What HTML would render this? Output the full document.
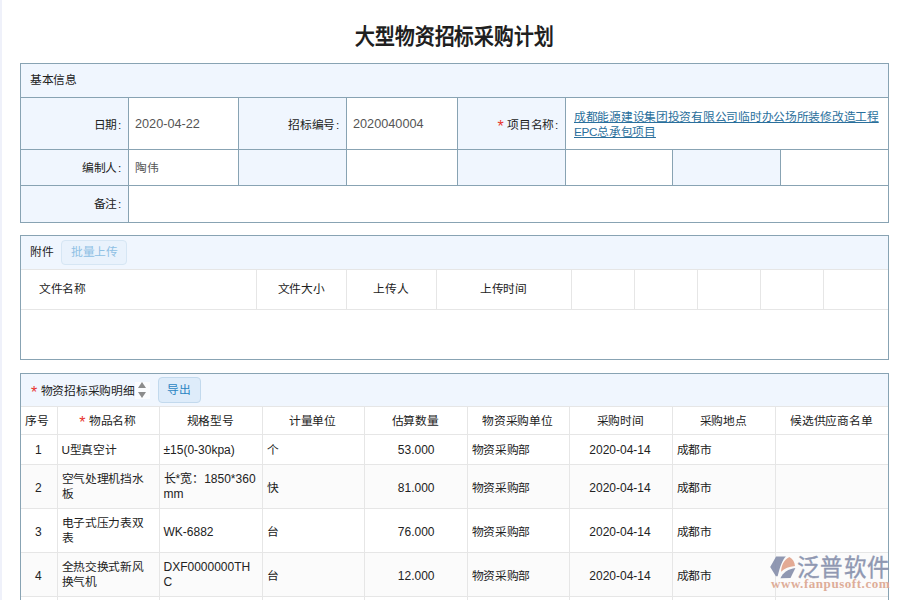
<!DOCTYPE html>
<html lang="zh-CN">
<head>
<meta charset="utf-8">
<title>大型物资招标采购计划</title>
<style>
*{box-sizing:border-box;margin:0;padding:0}
html,body{width:900px;height:600px;overflow:hidden;background:#fff}
body{font-family:"Liberation Sans",sans-serif;font-size:11.75px;color:#222;position:relative;letter-spacing:-.28px}
.strip{position:absolute;left:0;top:0;width:2px;height:600px;background:#eff1fa}
h1{position:absolute;left:20px;top:21.5px;width:869px;text-align:center;font-size:19.8px;line-height:28px;font-weight:bold;color:#1f1f1f;letter-spacing:-.15px;transform:scaleY(1.1);transform-origin:50% 50%}
table{border-collapse:collapse;table-layout:fixed}
.req{color:#e8352e;margin-right:3.5px;font-size:16px;line-height:0;vertical-align:-3px;letter-spacing:0}
.co{margin-left:1px}
#t1 tr.r2 td{padding-top:0}
#t1 tr.last td{padding-top:0;padding-bottom:1px}
a{color:#2a6f9c;text-decoration:underline}

/* basic info */
#t1{position:absolute;left:20px;top:63px;width:868px}
#t1 td{border:1px solid #88a3b3;vertical-align:middle;padding:1px 6px 0;line-height:15px;background:#fff}
#t1 td.l{background:#f0f6fe;text-align:right;padding-right:7px}
#t1 td.hd{background:#f0f6fe;padding:0 0 2px 9px}
#t1 td.v{font-size:12.7px;color:#555;letter-spacing:0}
#t1 td.n{color:#555}

/* attachments */
.box{position:absolute;left:20px;width:869px;border:1px solid #88a3b3;background:#fff}
#b2{top:235px;height:125px}
#b2 .hd{height:33px;line-height:31px;background:#f0f6fe;padding-left:9px}
.btn{display:inline-block;vertical-align:top;border-radius:4px;text-align:center}
#b2 .btn{margin:4px 0 0 8px;width:66px;height:25px;line-height:22px;border:1px solid #d6e6f4;background:#e9f2fc;color:#8ec0e4}
#t2{position:absolute;left:0;top:33px;width:867px}
#t2 td{height:40px;border:1px solid #e6e6e6;border-left:0;padding:0 0 4px 18px}
#t2 td.c{text-align:center;padding:0 0 4px}
#t2 td:last-child{border-right:0}

/* detail */
#b3{top:373px;height:240px;border-bottom:0}
#b3 .hd{height:32px;line-height:33px;background:#f0f6fe;padding-left:10px;white-space:nowrap}
#b3 .btn{margin:3px 0 0 8px;width:43px;height:26px;line-height:24px;border:1px solid #c2d9ed;background:#deecfa;color:#2a85c2}
.sort{display:inline-block;vertical-align:top;width:15px;height:17px;margin:8px 0 0 0;background:#fbfcfe;position:relative}
.sort i{position:absolute;left:3px;width:0;height:0;border-left:4px solid transparent;border-right:4px solid transparent}
.sort i.u{top:0;border-bottom:6px solid #8c8c8c}
.sort i.d{top:10px;border-top:6px solid #8c8c8c}
#t3{position:absolute;left:0;top:32px;width:867px}
#t3 td{border:1px solid #e6e6e6;border-left:0;padding:0 5px 0 4px;line-height:14.7px;vertical-align:middle;word-break:break-all}
#t3 td:last-child{border-right:0}
#t3 tr.h td{height:28px;text-align:center;padding-top:2px}
#t3 tr.one td{padding-top:2px}
#t3 td.s{padding-top:3px}
#t3 tr.g td{background:#fbfbfb}
#t3 td.c{text-align:center}
#t3 td.r{text-align:right;padding-right:32px}
#t3 td.en{font-size:12px;line-height:15px;letter-spacing:0}

/* watermark */
#wm{position:absolute;left:765px;top:550px;width:135px;height:50px;opacity:.92}
#wm .cn{position:absolute;left:32px;top:5.5px;transform:scaleY(1.05);transform-origin:0 50%;-webkit-text-stroke:.35px #8790ac;font-size:22.5px;line-height:26px;color:#8790ac;letter-spacing:.3px;white-space:nowrap}
#wm .url{position:absolute;left:6px;top:26px;font-family:"Liberation Serif",serif;font-weight:bold;font-size:13px;line-height:16px;color:#dca791;letter-spacing:.55px;white-space:nowrap}
</style>
</head>
<body>
<div class="strip"></div>
<h1>大型物资招标采购计划</h1>

<table id="t1">
  <colgroup><col style="width:108px"><col style="width:110px"><col style="width:108px"><col style="width:111px"><col style="width:108px"><col style="width:107px"><col style="width:108px"><col style="width:108px"></colgroup>
  <tr style="height:34px"><td class="hd" colspan="8">基本信息</td></tr>
  <tr style="height:52px"><td class="l">日期<span class="co">:</span></td><td class="v">2020-04-22</td><td class="l">招标编号<span class="co">:</span></td><td class="v">2020040004</td><td class="l"><span class="req">*</span>项目名称<span class="co">:</span></td><td colspan="3" style="padding-left:8px"><a>成都能源建设集团投资有限公司临时办公场所装修改造工程EPC总承包项目</a></td></tr>
  <tr style="height:36px" class="r2"><td class="l">编制人<span class="co">:</span></td><td class="n">陶伟</td><td class="l"></td><td></td><td class="l"></td><td></td><td class="l"></td><td></td></tr>
  <tr style="height:37px" class="last"><td class="l">备注<span class="co">:</span></td><td colspan="7"></td></tr>
</table>

<div class="box" id="b2">
  <div class="hd">附件<span class="btn">批量上传</span></div>
  <table id="t2">
    <colgroup><col style="width:235px"><col style="width:90px"><col style="width:90px"><col style="width:135px"><col style="width:63px"><col style="width:63px"><col style="width:63px"><col style="width:63px"><col style="width:65px"></colgroup>
    <tr><td>文件名称</td><td class="c">文件大小</td><td class="c">上传人</td><td class="c">上传时间</td><td></td><td></td><td></td><td></td><td></td></tr>
  </table>
</div>

<div class="box" id="b3">
  <div class="hd"><span class="req">*</span>物资招标采购明细<span class="sort"><i class="u"></i><i class="d"></i></span><span class="btn">导出</span></div>
  <table id="t3">
    <colgroup><col style="width:36px"><col style="width:102px"><col style="width:103px"><col style="width:102px"><col style="width:103px"><col style="width:102px"><col style="width:103px"><col style="width:103px"><col style="width:113px"></colgroup>
    <tr class="h"><td style="padding:2px 6px 0 2px">序号</td><td><span class="req">*</span>物品名称</td><td>规格型号</td><td>计量单位</td><td>估算数量</td><td>物资采购单位</td><td>采购时间</td><td>采购地点</td><td>候选供应商名单</td></tr>
    <tr class="one" style="height:30px"><td class="c en">1</td><td>U型真空计</td><td class="en">±15(0-30kpa)</td><td>个</td><td class="r en">53.000</td><td>物资采购部</td><td class="c en">2020-04-14</td><td>成都市</td><td></td></tr>
    <tr class="g" style="height:44px"><td class="c en s">2</td><td>空气处理机挡水板</td><td class="en">长*宽：1850*360mm</td><td class="s">快</td><td class="r en s">81.000</td><td class="s">物资采购部</td><td class="c en s">2020-04-14</td><td class="s">成都市</td><td></td></tr>
    <tr style="height:44px"><td class="c en s">3</td><td>电子式压力表双表</td><td class="en s">WK-6882</td><td class="s">台</td><td class="r en s">76.000</td><td class="s">物资采购部</td><td class="c en s">2020-04-14</td><td class="s">成都市</td><td></td></tr>
    <tr class="g" style="height:44px"><td class="c en s">4</td><td>全热交换式新风换气机</td><td class="en">DXF0000000THC</td><td class="s">台</td><td class="r en s">12.000</td><td class="s">物资采购部</td><td class="c en s">2020-04-14</td><td class="s">成都市</td><td></td></tr>
    <tr style="height:44px"><td class="c"></td><td></td><td></td><td></td><td class="r"></td><td></td><td class="c"></td><td></td><td></td></tr>
  </table>
</div>

<div id="wm">
  <svg width="32" height="30" viewBox="0 0 32 30" style="position:absolute;left:4px;top:4px">
    <path d="M1.2 12.9 L7.1 2.4 L16.9 2.4 C13.5 5.5 11.3 12 8.6 22.2 L6.9 22.2 Z" fill="#8790ac"/>
    <path d="M12.1 17.7 C12.3 12 14.5 6 20.4 3.1 C24 5 25.6 8.5 26 12 C20 12.6 15.5 14.5 12.1 17.7 Z" fill="#e2a48c"/>
    <path d="M11.4 24.3 C14 18.5 19.5 14.8 26.4 14 L21.5 24.1 Z" fill="#8790ac"/>
  </svg>
  <div class="cn">泛普软件</div>
  <div class="url">www.fanpusoft.com</div>
</div>
</body>
</html>
